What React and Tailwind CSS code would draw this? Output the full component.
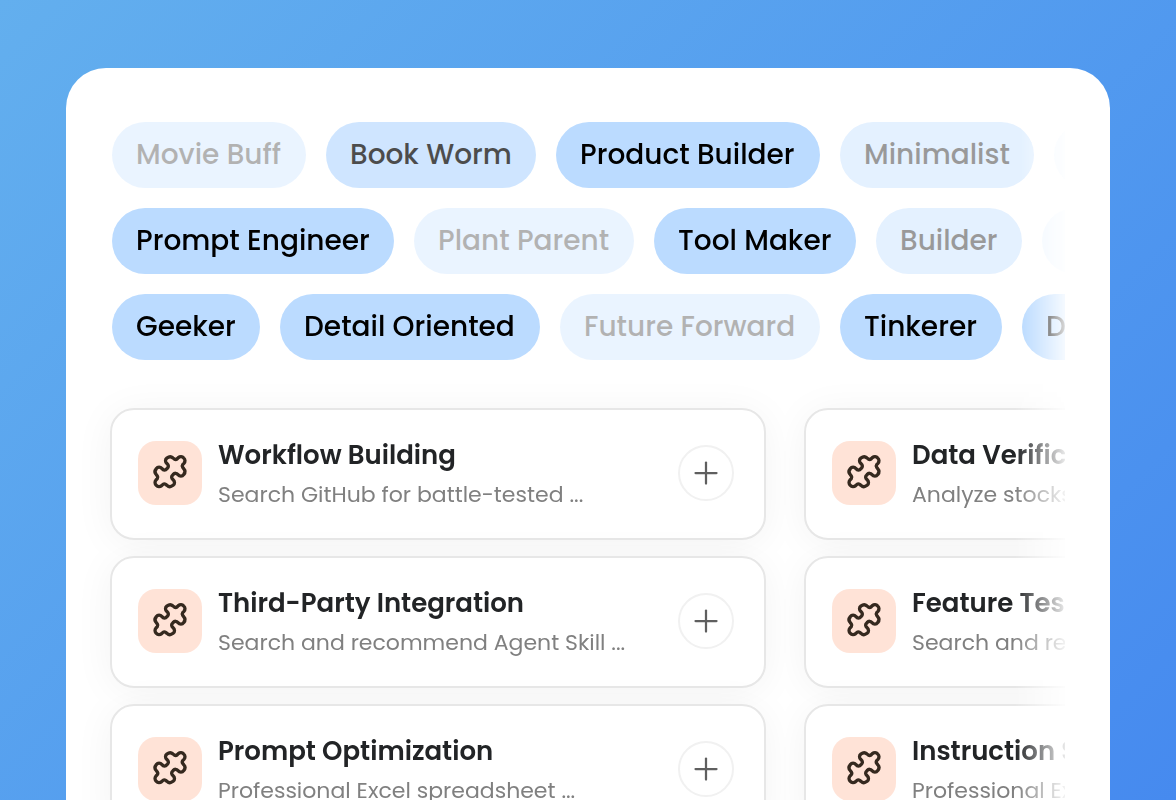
import { Plus } from "lucide-react";

const chipRows = [
  [
    ["Movie Buff", "w-[194px] opacity-30"],
    ["Book Worm", "w-[210px] opacity-70"],
    ["Product Builder", "w-[264px] opacity-100"],
    ["Minimalist", "w-[194px] opacity-40"],
    ["Dreamer", "w-[180px] opacity-20"],
  ],
  [
    ["Prompt Engineer", "w-[282px] opacity-100"],
    ["Plant Parent", "w-[220px] opacity-30"],
    ["Tool Maker", "w-[202px] opacity-100"],
    ["Builder", "w-[146px] opacity-40"],
    ["Curious", "w-[160px] opacity-20"],
  ],
  [
    ["Geeker", "w-[148px] opacity-100"],
    ["Detail Oriented", "w-[260px] opacity-100"],
    ["Future Forward", "w-[260px] opacity-30"],
    ["Tinkerer", "w-[162px] opacity-100"],
    ["Designer", "w-[180px] opacity-100"],
  ],
];

const columns = [
  [
    ["Workflow Building", "Search GitHub for battle-tested ..."],
    ["Third-Party Integration", "Search and recommend Agent Skill ..."],
    ["Prompt Optimization", "Professional Excel spreadsheet ..."],
  ],
  [
    ["Data Verification", "Analyze stocks and markets ..."],
    ["Feature Testing", "Search and recommend Agent Skill ..."],
    ["Instruction Setup", "Professional Excel spreadsheet ..."],
  ],
];

function PuzzleIcon() {
  return (
    <svg
      viewBox="-60 -56 120 120"
      className="size-10"
      fill="none"
      stroke="currentColor"
      strokeWidth="10"
      strokeLinejoin="round"
      aria-hidden="true"
    >
      <path d="M-9 -9C-3 -14 -4 -20 -9 -24C-15 -29 -15 -37 -9 -41C-3 -46 4 -46 9 -41L13 -38C16 -36 18 -36 21 -38L25 -42C30 -46 37 -46 41 -41C46 -37 46 -30 42 -25L38 -21C36 -18 36 -16 38 -13L41 -9C46 -4 46 3 41 9C37 15 29 15 24 9C20 4 14 3 9 9C3 14 4 20 9 24C15 29 15 37 9 41C3 46 -4 46 -9 41L-13 38C-16 36 -18 36 -21 38L-25 42C-30 46 -37 46 -41 41C-46 37 -46 30 -42 25L-38 21C-36 18 -36 16 -38 13L-41 9C-46 4 -46 -3 -41 -9C-37 -15 -29 -15 -24 -9C-20 -4 -14 -3 -9 -9Z" />
    </svg>
  );
}

function SkillCard({ title, text }) {
  return (
    <article className="flex h-[132px] items-center gap-4 rounded-3xl border-2 border-[#e7e7e7] bg-white pr-[30px] pb-0.5 pl-[26px] shadow-[0_4px_40px_rgba(0,0,0,0.05)]">
      <div className="flex size-16 shrink-0 items-center justify-center rounded-[18px] bg-[#ffe3d7] text-[#35291f]">
        <PuzzleIcon />
      </div>
      <div className="min-w-0 flex-1 pt-1">
        <h2 className="truncate text-[26px] leading-10 font-semibold text-[#222426]">{title}</h2>
        <p className="truncate text-[22px] leading-10 text-[#808080]">{text}</p>
      </div>
      <button
        type="button"
        aria-label={`Add ${title}`}
        className="flex size-14 shrink-0 items-center justify-center rounded-full border-2 border-[#f1f1f1] bg-white text-[#5f5f5f]"
      >
        <Plus size={36} strokeWidth={1.5} className="shrink-0" />
      </button>
    </article>
  );
}

export default function App() {
  return (
    <main className="flex h-screen overflow-hidden bg-linear-135 from-[#63afee] to-[#468aef] px-[66px] pt-[68px] font-[Poppins,Inter,sans-serif]">
      <div className="min-w-0 flex-1 overflow-hidden rounded-t-[40px] bg-white pt-[54px] pr-[45px]">
        <div className="flex flex-col gap-5 overflow-hidden pl-[46px] [mask-image:linear-gradient(to_right,black_calc(100%-44px),rgba(0,0,0,0.15))]">
          {chipRows.map((row, i) => (
            <ul key={i} className="flex gap-5">
              {row.map(([label, look]) => (
                <li
                  key={label}
                  className={`flex h-[66px] shrink-0 items-center rounded-full bg-[#bbdbff] pl-6 text-[28px] font-medium whitespace-nowrap text-black ${look}`}
                >
                  {label}
                </li>
              ))}
            </ul>
          ))}
        </div>
        <div className="flex gap-[38px] overflow-hidden pt-12 pl-11 [mask-image:linear-gradient(to_right,black_calc(100%-50px),rgba(0,0,0,0.1))]">
          {columns.map((cards, c) => (
            <div key={c} className="flex w-[656px] shrink-0 flex-col gap-4">
              {cards.map(([title, text]) => (
                <SkillCard key={title} title={title} text={text} />
              ))}
            </div>
          ))}
        </div>
      </div>
    </main>
  );
}
